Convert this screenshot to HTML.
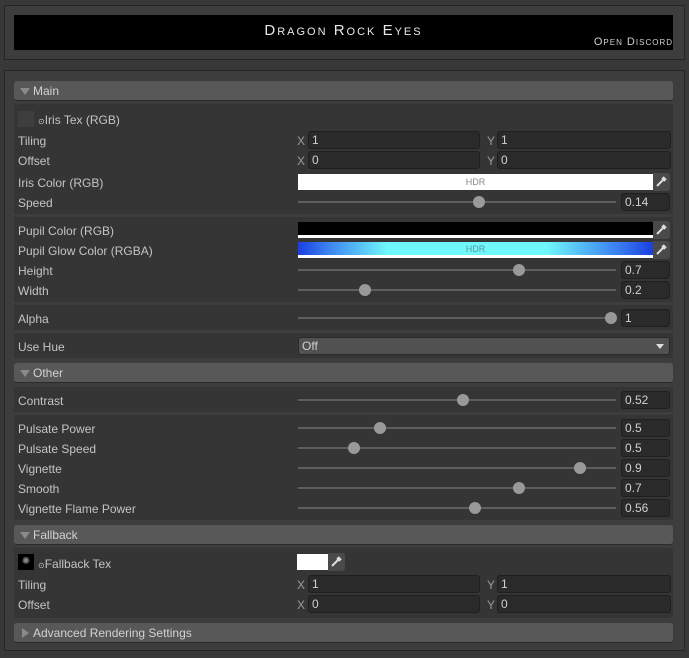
<!DOCTYPE html>
<html><head><meta charset="utf-8"><style>
*{margin:0;padding:0;box-sizing:border-box}
body{width:689px;height:658px;background:#383838;font-family:"Liberation Sans",sans-serif;font-size:12px;color:#c4c4c4;position:relative;overflow:hidden}
.a{position:absolute}
.frame{border:1px solid #252525;background:#3d3d3d}
.grp{background:#353535;left:14px;width:659px}
.hdr{left:14px;width:659px;height:20px;background:#585858;border-radius:3px;border-bottom:1px solid #2a2a2a;color:#d2d2d2;font-size:12px;line-height:21px;padding-left:19px}
.hdr:before{content:"";position:absolute;left:6px;top:7px;border-left:5px solid transparent;border-right:5px solid transparent;border-top:7px solid #8a8a8a}
.hdr.c:before{left:8px;top:5px;border-top:5px solid transparent;border-bottom:5px solid transparent;border-left:7px solid #8a8a8a;border-right:0}
.lb{left:18px;line-height:16px}
.fld{background:#2a2a2a;border:1px solid #1f1f1f;border-radius:3px;height:18px;line-height:17px;padding-left:3px;color:#d0d0d0}
.track{left:298px;width:318px;height:2px;background:#5e5e5e}
.knob{width:12px;height:12px;border-radius:6px;background:#999}
.num{left:621px;width:49px}
.xy{color:#9a9a9a;line-height:16px}
.eye{width:17px;height:18px;background:#4a4a4a;border-radius:0 3px 3px 0}
.eye svg{position:absolute;left:3px;top:3px}
</style></head><body>
<div class="a frame" style="left:4px;top:5px;width:681px;height:55px"></div>
<div class="a" style="left:14px;top:15px;width:659px;height:35px;background:#000"></div>
<div class="a" style="left:14px;top:22px;width:659px;text-align:center;color:#e8e8e8;font-size:15px;letter-spacing:2px;font-variant:small-caps">Dragon Rock Eyes</div>
<div class="a" style="right:16px;top:36px;color:#d0d0d0;font-size:11px;letter-spacing:1px;font-variant:small-caps">Open Discord</div>

<div class="a frame" style="left:4px;top:70px;width:681px;height:581px"></div>

<div class="a hdr" style="top:81px">Main</div>
<div class="a grp" style="top:104px;height:110px"></div>
<div class="a grp" style="top:217px;height:85px"></div>
<div class="a grp" style="top:305px;height:25px"></div>
<div class="a grp" style="top:333px;height:25px"></div>
<div class="a hdr" style="top:363px">Other</div>
<div class="a grp" style="top:387px;height:25px"></div>
<div class="a grp" style="top:415px;height:105px"></div>
<div class="a hdr" style="top:525px">Fallback</div>
<div class="a grp" style="top:548px;height:70px"></div>
<div class="a hdr c" style="top:623px">Advanced Rendering Settings</div>

<!-- Main -->
<div class="a" style="left:18px;top:111px;width:16px;height:16px;background:#3e3e3e"></div>
<div class="a lb" style="left:38px;top:112px"><span style="font-size:8px">⊙</span>Iris Tex (RGB)</div>
<div class="a lb" style="top:133px">Tiling</div>
<div class="a xy" style="left:297px;top:133px">X</div><div class="a fld" style="left:308px;top:131px;width:172px">1</div>
<div class="a xy" style="left:487px;top:133px">Y</div><div class="a fld" style="left:497px;top:131px;width:174px">1</div>
<div class="a lb" style="top:153px">Offset</div>
<div class="a xy" style="left:297px;top:153px">X</div><div class="a fld" style="left:308px;top:151px;width:172px">0</div>
<div class="a xy" style="left:487px;top:153px">Y</div><div class="a fld" style="left:497px;top:151px;width:174px">0</div>
<div class="a lb" style="top:175px">Iris Color (RGB)</div>
<div class="a" style="left:298px;top:174px;width:355px;height:16px;background:#fff;color:#888;font-size:9px;text-align:center;line-height:17px">HDR</div>
<div class="a eye" style="left:653px;top:173px"><svg width="11" height="11"><path d="M1 10 L7 4 M6 2 L9 5 M7 1 L10 4" stroke="#ddd" stroke-width="2"/></svg></div>
<div class="a lb" style="top:195px">Speed</div>
<div class="a track" style="top:201px"></div><div class="a knob" style="left:473px;top:196px"></div>
<div class="a fld num" style="top:193px">0.14</div>

<div class="a lb" style="top:223px">Pupil Color (RGB)</div>
<div class="a" style="left:298px;top:222px;width:355px;height:16px;background:#000;border-bottom:3px solid #fff"></div>
<div class="a eye" style="left:653px;top:221px"><svg width="11" height="11"><path d="M1 10 L7 4 M6 2 L9 5 M7 1 L10 4" stroke="#ddd" stroke-width="2"/></svg></div>
<div class="a lb" style="top:243px">Pupil Glow Color (RGBA)</div>
<div class="a" style="left:298px;top:242px;width:355px;height:16px;background:linear-gradient(90deg,#1a3fe0 0%,#3a7ff0 8%,#6ff7fb 25%,#6ff7fb 70%,#3a7ff0 90%,#1a3fe0 100%);border-bottom:3px solid #fff;color:#5a9aa0;font-size:9px;text-align:center;line-height:15px">HDR</div>
<div class="a eye" style="left:653px;top:241px"><svg width="11" height="11"><path d="M1 10 L7 4 M6 2 L9 5 M7 1 L10 4" stroke="#ddd" stroke-width="2"/></svg></div>
<div class="a lb" style="top:263px">Height</div>
<div class="a track" style="top:269px"></div><div class="a knob" style="left:513px;top:264px"></div>
<div class="a fld num" style="top:261px">0.7</div>
<div class="a lb" style="top:283px">Width</div>
<div class="a track" style="top:289px"></div><div class="a knob" style="left:359px;top:284px"></div>
<div class="a fld num" style="top:281px">0.2</div>

<div class="a lb" style="top:311px">Alpha</div>
<div class="a track" style="top:317px"></div><div class="a knob" style="left:605px;top:312px"></div>
<div class="a fld num" style="top:309px">1</div>

<div class="a lb" style="top:339px">Use Hue</div>
<div class="a" style="left:298px;top:337px;width:372px;height:18px;background:#515151;border:1px solid #2a2a2a;border-radius:3px;padding-left:3px;line-height:16px;color:#d0d0d0">Off</div>
<div class="a" style="left:656px;top:344px;border-left:4px solid transparent;border-right:4px solid transparent;border-top:5px solid #ddd"></div>

<!-- Other -->
<div class="a lb" style="top:393px">Contrast</div>
<div class="a track" style="top:399px"></div><div class="a knob" style="left:457px;top:394px"></div>
<div class="a fld num" style="top:391px">0.52</div>

<div class="a lb" style="top:421px">Pulsate Power</div>
<div class="a track" style="top:427px"></div><div class="a knob" style="left:374px;top:422px"></div>
<div class="a fld num" style="top:419px">0.5</div>
<div class="a lb" style="top:441px">Pulsate Speed</div>
<div class="a track" style="top:447px"></div><div class="a knob" style="left:348px;top:442px"></div>
<div class="a fld num" style="top:439px">0.5</div>
<div class="a lb" style="top:461px">Vignette</div>
<div class="a track" style="top:467px"></div><div class="a knob" style="left:574px;top:462px"></div>
<div class="a fld num" style="top:459px">0.9</div>
<div class="a lb" style="top:481px">Smooth</div>
<div class="a track" style="top:487px"></div><div class="a knob" style="left:513px;top:482px"></div>
<div class="a fld num" style="top:479px">0.7</div>
<div class="a lb" style="top:501px">Vignette Flame Power</div>
<div class="a track" style="top:507px"></div><div class="a knob" style="left:469px;top:502px"></div>
<div class="a fld num" style="top:499px">0.56</div>

<!-- Fallback -->
<div class="a" style="left:18px;top:554px;width:16px;height:16px;background:#000;color:#888;font-size:10px;text-align:center;line-height:16px">✺</div>
<div class="a lb" style="left:38px;top:556px"><span style="font-size:8px">⊙</span>Fallback Tex</div>
<div class="a" style="left:297px;top:554px;width:31px;height:16px;background:#fff"></div>
<div class="a eye" style="left:328px;top:553px"><svg width="11" height="11"><path d="M1 10 L7 4 M6 2 L9 5 M7 1 L10 4" stroke="#ddd" stroke-width="2"/></svg></div>
<div class="a lb" style="top:577px">Tiling</div>
<div class="a xy" style="left:297px;top:577px">X</div><div class="a fld" style="left:308px;top:575px;width:172px">1</div>
<div class="a xy" style="left:487px;top:577px">Y</div><div class="a fld" style="left:497px;top:575px;width:174px">1</div>
<div class="a lb" style="top:597px">Offset</div>
<div class="a xy" style="left:297px;top:597px">X</div><div class="a fld" style="left:308px;top:595px;width:172px">0</div>
<div class="a xy" style="left:487px;top:597px">Y</div><div class="a fld" style="left:497px;top:595px;width:174px">0</div>
</body></html>
